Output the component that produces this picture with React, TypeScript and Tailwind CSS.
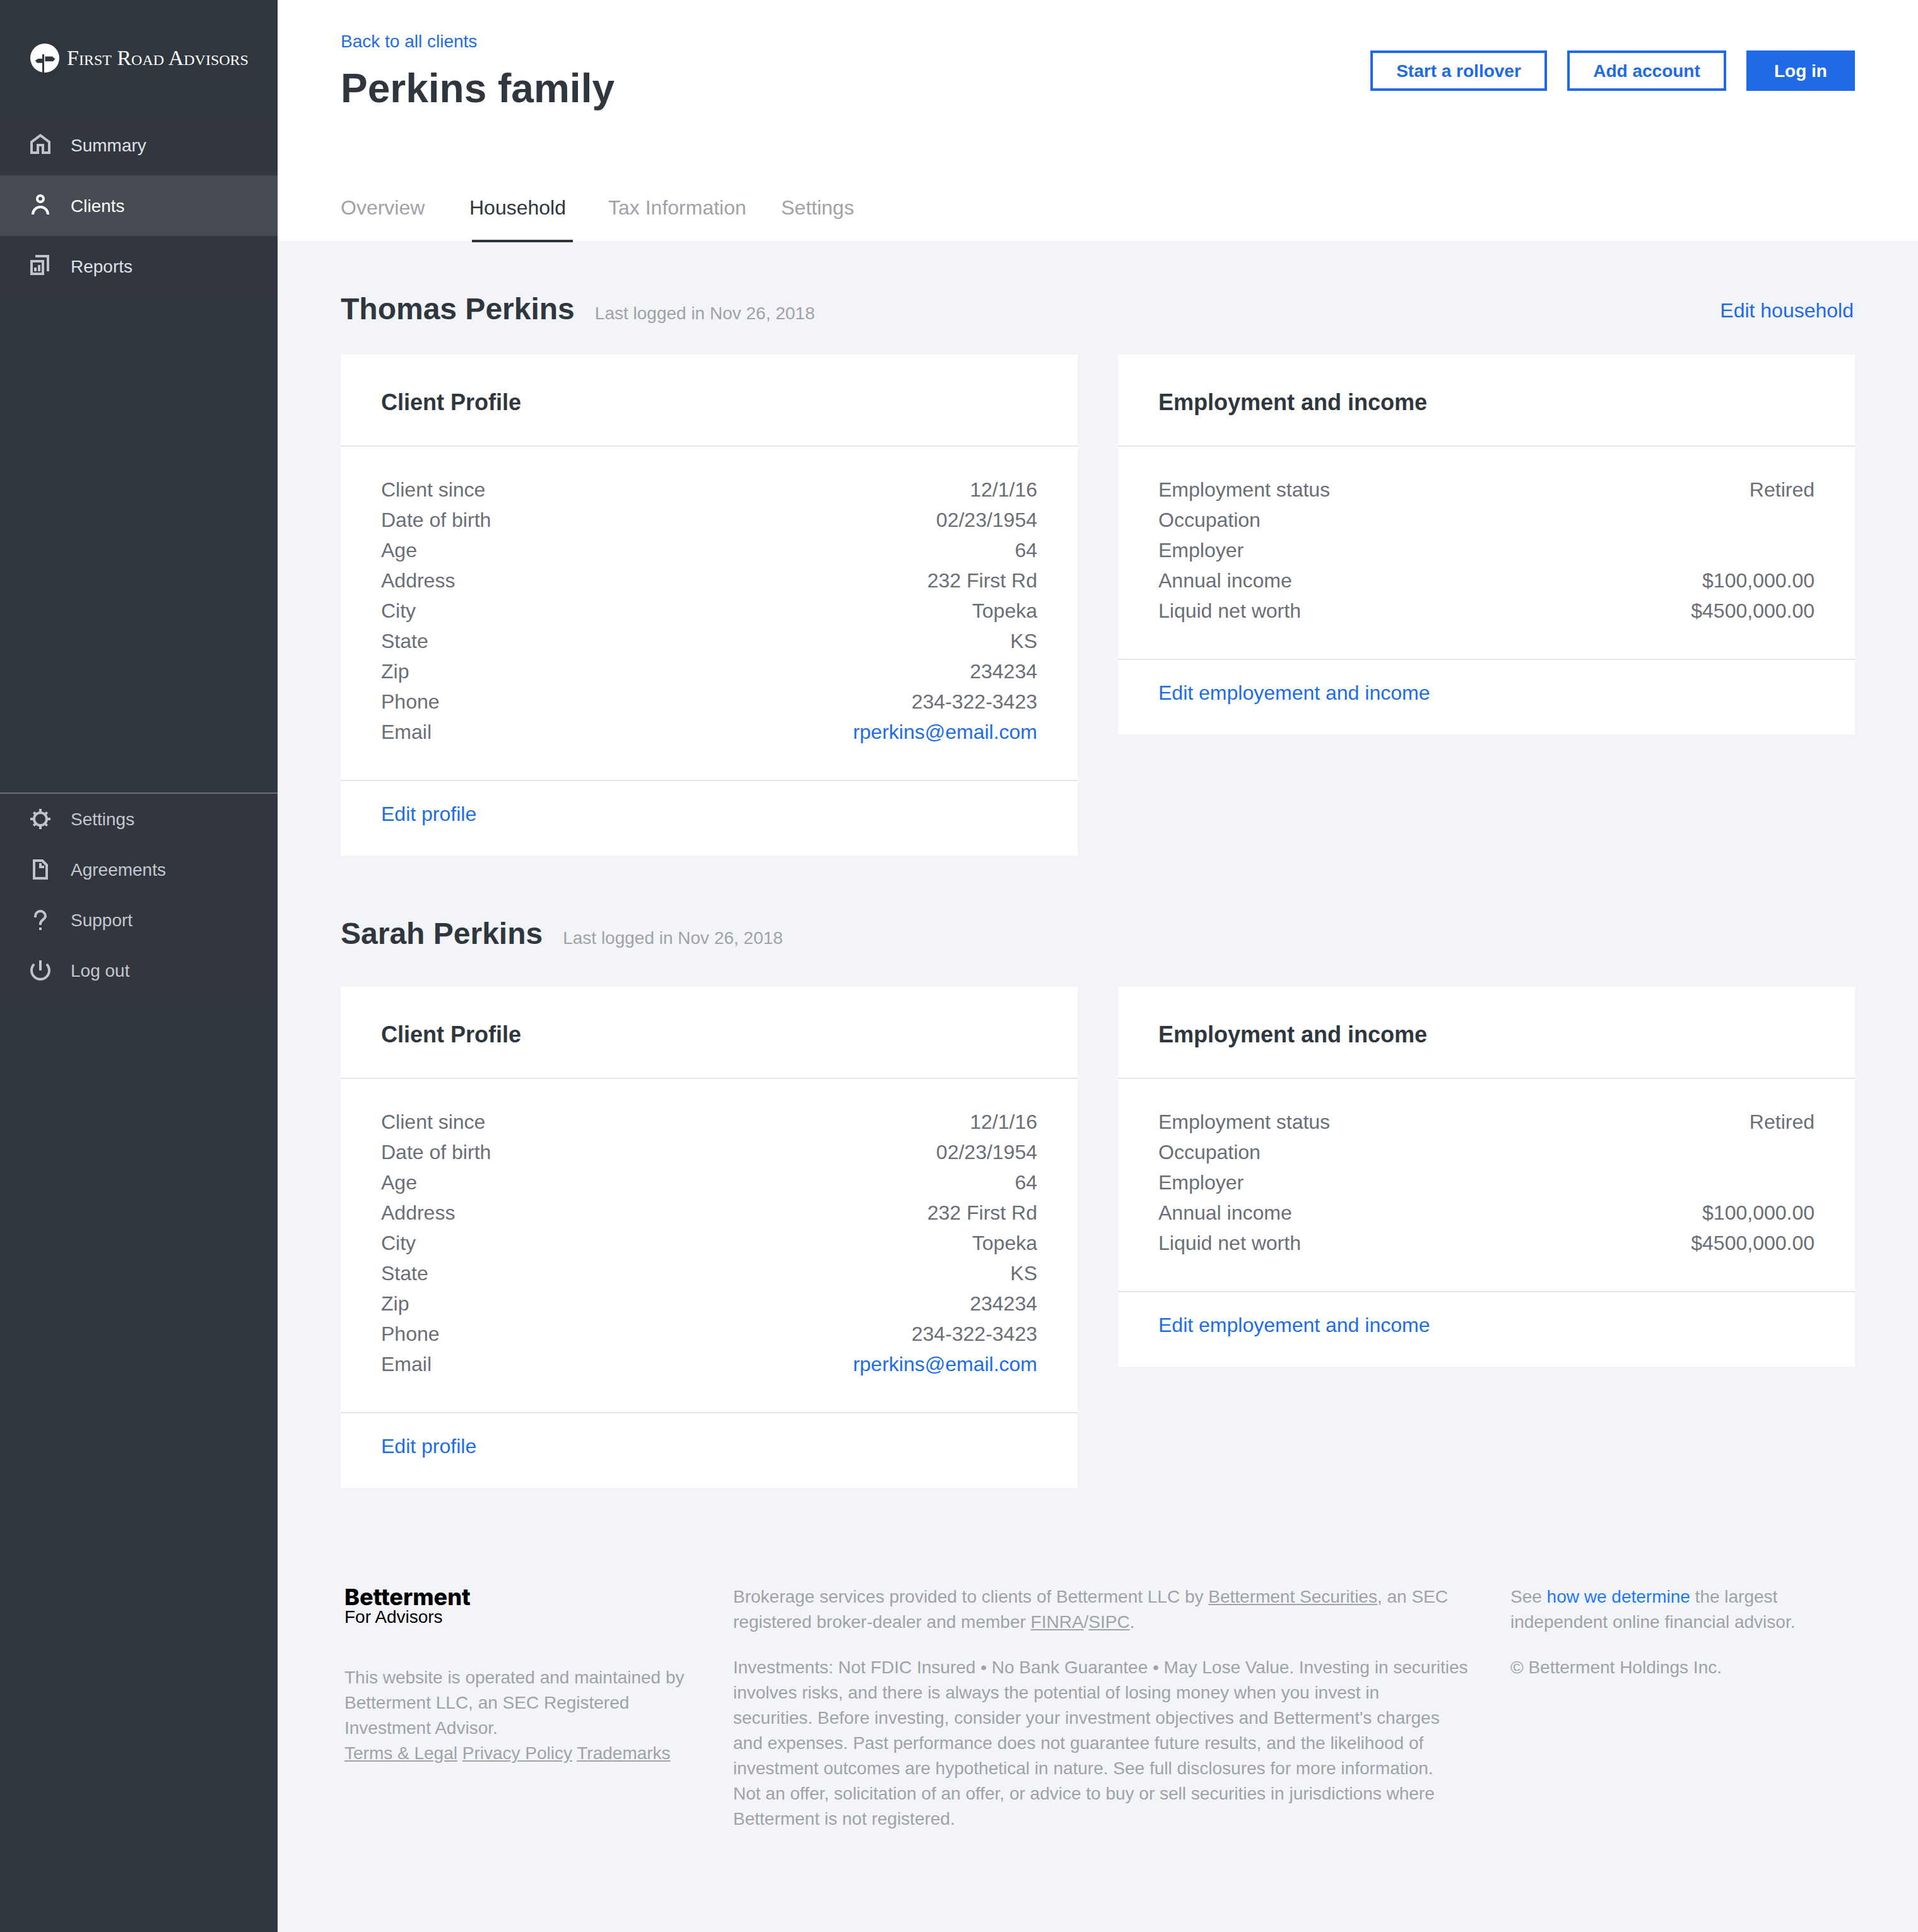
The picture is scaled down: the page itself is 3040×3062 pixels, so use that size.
import React from "react";

type Row = { label: string; value?: string; href?: string };

const profileRows: Row[] = [
  { label: "Client since", value: "12/1/16" },
  { label: "Date of birth", value: "02/23/1954" },
  { label: "Age", value: "64" },
  { label: "Address", value: "232 First Rd" },
  { label: "City", value: "Topeka" },
  { label: "State", value: "KS" },
  { label: "Zip", value: "234234" },
  { label: "Phone", value: "234-322-3423" },
  { label: "Email", value: "rperkins@email.com", href: "mailto:rperkins@email.com" },
];

const employmentRows: Row[] = [
  { label: "Employment status", value: "Retired" },
  { label: "Occupation" },
  { label: "Employer" },
  { label: "Annual income", value: "$100,000.00" },
  { label: "Liquid net worth", value: "$4500,000.00" },
];

function Icon({ children }: { children: React.ReactNode }) {
  return (
    <svg viewBox="0 0 32 32" className="size-8 shrink-0" fill="none" aria-hidden="true">
      {children}
    </svg>
  );
}

const HomeIcon = () => (
  <Icon>
    <path
      fill="currentColor"
      fillRule="evenodd"
      d="M16 0L32 12V32H18V20H14V32H0V12ZM4 14V28H10V16H22V28H28V14L16 5Z"
    />
  </Icon>
);

const PersonIcon = () => (
  <Icon>
    <g stroke="currentColor" strokeWidth="4">
      <circle cx="16" cy="7" r="5" />
      <path d="M4 32a12 12 0 0 1 24 0" />
    </g>
  </Icon>
);

const ReportsIcon = () => (
  <Icon>
    <path stroke="currentColor" strokeWidth="4" d="M2 10H20V30H2ZM8 2H28V26" />
    <path fill="currentColor" d="M6 20h4v6H6zM12 16h4v10h-4z" />
  </Icon>
);

const GearIcon = () => (
  <Icon>
    <g stroke="currentColor" strokeWidth="4">
      <circle cx="16" cy="16" r="10" />
      <path d="M16 0V6M16 26V32M0 16H6M26 16H32M5.3 5.3L9 9M26.7 5.3L23 9M5.3 26.7L9 23M26.7 26.7L23 23" />
    </g>
  </Icon>
);

const DocumentIcon = () => (
  <Icon>
    <path
      fill="currentColor"
      fillRule="evenodd"
      d="M4 0H20L28 8V32H4ZM8 4V28H24V10L18 4ZM14 6H18V10H22V14H14Z"
    />
  </Icon>
);

const QuestionIcon = () => (
  <Icon>
    <path stroke="currentColor" strokeWidth="4" d="M8 12V10A8 8 0 0 1 24 10C24 15 16 16 16 22V24" />
    <path fill="currentColor" d="M14 28h4v4h-4z" />
  </Icon>
);

const PowerIcon = () => (
  <Icon>
    <path stroke="currentColor" strokeWidth="4" d="M25.9 6.1A14 14 0 1 1 6.1 6.1M16 0V16" />
  </Icon>
);

const mainNav = [
  { label: "Summary", icon: <HomeIcon /> },
  { label: "Clients", icon: <PersonIcon />, active: true },
  { label: "Reports", icon: <ReportsIcon /> },
];

const secondaryNav = [
  { label: "Settings", icon: <GearIcon /> },
  { label: "Agreements", icon: <DocumentIcon /> },
  { label: "Support", icon: <QuestionIcon /> },
  { label: "Log out", icon: <PowerIcon /> },
];

function Sidebar() {
  return (
    <aside className="w-[440px] shrink-0 bg-[#2f363d]">
      <a href="#" className="flex h-[182px] items-start gap-3 pt-[69px] pl-12 text-white">
        <svg viewBox="0 0 46 46" className="size-[46px] shrink-0" aria-hidden="true">
          <circle cx="23" cy="23" r="23" fill="currentColor" />
          <path
            fill="#2f363d"
            d="M19 17h3v29h-3zM23.400 20.600H35L39.500 24.500L36 28.300H23.400zM19 24H12.500L7.700 27L11 30.700H19z"
          />
        </svg>
        <span className="font-['Liberation_Serif',serif] text-[34px] leading-[46px] whitespace-nowrap [font-variant-caps:small-caps]">
          First Road Advisors
        </span>
      </a>
      <nav aria-label="Main" className="bg-[#32363f]">
        {mainNav.map((item) => (
          <a
            key={item.label}
            href="#"
            aria-current={item.active ? "page" : undefined}
            className={
              item.active
                ? "flex h-24 items-center gap-8 bg-[#464a51] px-12 text-white"
                : "flex h-24 items-center gap-8 px-12 text-[#dfe1e9]"
            }
          >
            <span className={item.active ? "mb-1" : "mb-1 text-[#c0c3cd]"}>{item.icon}</span>
            <span className="pt-0.5">{item.label}</span>
          </a>
        ))}
      </nav>
      <nav aria-label="Account" className="mt-[786px] border-t-2 border-[#6c6e76] bg-[#32363f]">
        {secondaryNav.map((item) => (
          <a key={item.label} href="#" className="flex h-20 items-center gap-8 px-12 text-[#c5c7ce]">
            <span className="text-[#c0c3cd]">{item.icon}</span>
            <span className="pt-0.5">{item.label}</span>
          </a>
        ))}
      </nav>
    </aside>
  );
}

function Card({ title, rows, action }: { title: string; rows: Row[]; action: string }) {
  return (
    <article className="bg-white text-[32px] leading-[48px]">
      <h3 className="border-b-2 border-[#e1e4ea] px-16 pt-[52px] pb-11 text-[36px] leading-[48px] font-bold text-[#2f363d]">
        {title}
      </h3>
      <dl className="px-16 pt-11 pb-[52px] text-[#6a6e76]">
        {rows.map((row) => (
          <div key={row.label} className="flex justify-between">
            <dt>{row.label}</dt>
            <dd>
              {row.href ? (
                <a href={row.href} className="text-[#1c6cea]">
                  {row.value}
                </a>
              ) : (
                row.value
              )}
            </dd>
          </div>
        ))}
      </dl>
      <div className="border-t-2 border-[#e1e4ea] px-16 pt-7 pb-[42px]">
        <a href="#" className="text-[#1c6cea]">
          {action}
        </a>
      </div>
    </article>
  );
}

function Person({ name, action }: { name: string; action?: string }) {
  return (
    <section>
      <div className={action ? "mb-10 flex items-center justify-between" : "mb-[52px] flex items-center"}>
        <div className="flex items-baseline gap-8">
          <h2 className="text-[48px] leading-[64px] font-bold text-[#2f363d]">{name}</h2>
          <p className="text-[#a0a2a8]">Last logged in Nov 26, 2018</p>
        </div>
        {action && (
          <a href="#" className="pt-1 pr-0.5 text-[32px] leading-[48px] text-[#1f6ae5]">
            {action}
          </a>
        )}
      </div>
      <div className="grid grid-cols-2 items-start gap-16">
        <Card title="Client Profile" rows={profileRows} action="Edit profile" />
        <Card title="Employment and income" rows={employmentRows} action="Edit employement and income" />
      </div>
    </section>
  );
}

function Header() {
  return (
    <header className="bg-white px-[100px]">
      <div className="flex items-start justify-between pt-[46px]">
        <div>
          <a href="#" className="block text-[#1c6cea]">
            Back to all clients
          </a>
          <h1 className="mt-3 text-[64px] leading-[84px] font-bold text-[#2f363d]">Perkins family</h1>
        </div>
        <div className="flex gap-8 pt-[34px] font-bold">
          <button type="button" className="h-16 w-[280px] border-4 border-[#1f6ae5] pt-0.5 text-[#1f6ae5]">
            Start a rollover
          </button>
          <button type="button" className="h-16 w-[252px] border-4 border-[#1f6ae5] pt-0.5 text-[#1f6ae5]">
            Add account
          </button>
          <button type="button" className="h-16 w-[172px] bg-[#1f6ae5] pt-0.5 text-white">
            Log in
          </button>
        </div>
      </div>
      <nav
        aria-label="Client"
        className="mt-[127px] grid h-[73px] grid-cols-[204px_220px_274px_auto] justify-start text-[32px] leading-10 text-[#a0a2a8]"
      >
        <a href="#">Overview</a>
        <a href="#" aria-current="page" className="relative text-[#2f363d]">
          Household
          <span className="absolute -bottom-0.5 left-1 h-1 w-40 bg-[#2f333e]" />
        </a>
        <a href="#">Tax Information</a>
        <a href="#">Settings</a>
      </nav>
    </header>
  );
}

function Footer() {
  return (
    <footer className="mt-[153px] grid grid-cols-[616fr_1232fr_546fr] pb-[151px] pl-1.5 text-[#a0a2a8]">
      <div className="pr-16">
        <p className="font-['Inter',sans-serif] text-[36px] leading-10 font-extrabold text-black">Betterment</p>
        <p className="leading-6 text-black">For Advisors</p>
        <p className="mt-16">This website is operated and maintained by Betterment LLC, an SEC Registered Investment Advisor.</p>
        <p>
          <a href="#" className="underline">Terms &amp; Legal</a>{" "}
          <a href="#" className="underline">Privacy Policy</a>{" "}
          <a href="#" className="underline">Trademarks</a>
        </p>
      </div>
      <div className="flex flex-col gap-8 pr-12">
        <p>
          Brokerage services provided to clients of Betterment LLC by{" "}
          <a href="#" className="underline">Betterment Securities</a>, an SEC
          <br />
          registered broker-dealer and member <a href="#" className="underline">FINRA</a>/
          <a href="#" className="underline">SIPC</a>.
        </p>
        <p>
          Investments: Not FDIC Insured • No Bank Guarantee • May Lose Value. Investing in securities
          <br />
          involves risks, and there is always the potential of losing money when you invest in
          <br />
          securities. Before investing, consider your investment objectives and Betterment's charges
          <br />
          and expenses. Past performance does not guarantee future results, and the likelihood of
          <br />
          investment outcomes are hypothetical in nature. See full disclosures for more information.
          <br />
          Not an offer, solicitation of an offer, or advice to buy or sell securities in jurisdictions where
          <br />
          Betterment is not registered.
        </p>
      </div>
      <div className="flex flex-col gap-8 pr-14">
        <p>
          See <a href="#" className="text-[#1f78f5]">how we determine</a> the largest independent online financial
          advisor.
        </p>
        <p>© Betterment Holdings Inc.</p>
      </div>
    </footer>
  );
}

export default function App() {
  return (
    <div className="flex min-h-screen bg-[#f2f4f8] font-['Liberation_Sans',Arial,sans-serif] text-[28px] leading-10">
      <Sidebar />
      <div className="min-w-0 flex-1">
        <Header />
        <main className="flex flex-col gap-[92px] px-[100px] pt-[76px]">
          <Person name="Thomas Perkins" action="Edit household" />
          <Person name="Sarah Perkins" />
        </main>
        <div className="px-[100px]">
          <Footer />
        </div>
      </div>
    </div>
  );
}
